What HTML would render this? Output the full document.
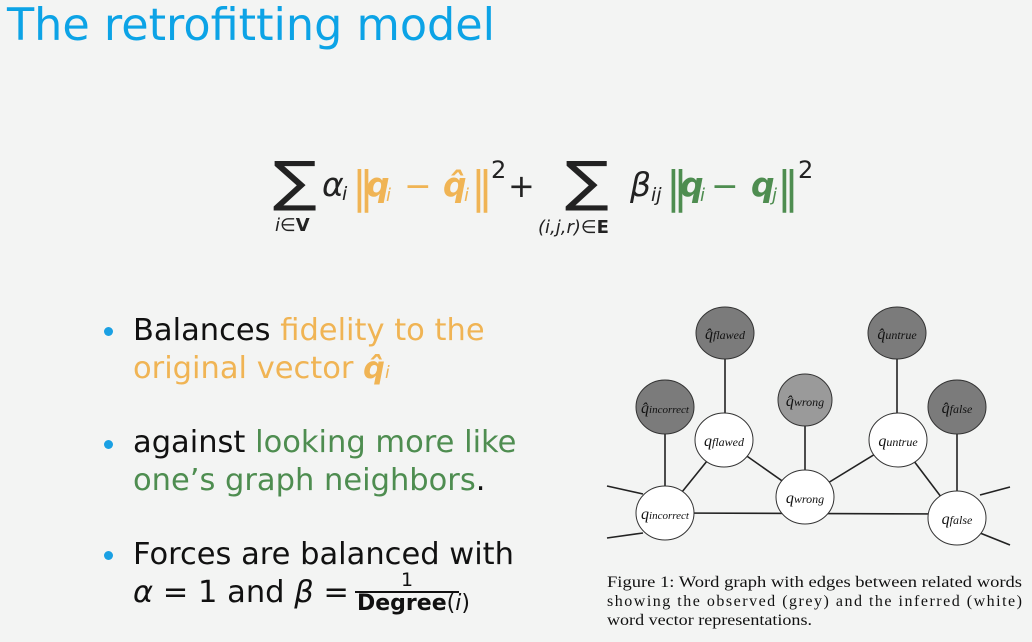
<!DOCTYPE html>
<html><head><meta charset="utf-8"><style>
body{margin:0;width:1032px;height:642px;background:#f3f4f3;position:relative;overflow:hidden;font-family:"DejaVu Sans","Liberation Sans",sans-serif}
.a{position:absolute;white-space:nowrap}
.t{left:7px;top:0px;font-size:44.5px;color:#0ca3e6}
.b{font-size:30.5px;color:#111;left:133px;line-height:36px}
.dot{position:absolute;width:9px;height:9px;border-radius:50%;background:#1aa0e3;left:104px}
.o{color:#f0b454}.g{color:#4e8d50}
.eq{font-family:"DejaVu Sans",sans-serif;font-style:italic}
</style></head><body>
<div class="a t">The retrofitting model</div>

<svg class="a" style="left:0;top:0" width="1032" height="642">
<g font-family="DejaVu Sans, sans-serif">
<text x="273" y="200" font-size="54" fill="#222" textLength="44" lengthAdjust="spacingAndGlyphs">∑</text>
<text x="275" y="231" font-size="18" fill="#222" font-style="italic">i∈<tspan font-style="normal" font-weight="bold">V</tspan></text>
<text x="322" y="196" font-size="33" fill="#222" font-style="italic">α</text>
<text x="342" y="200" font-size="19" fill="#222" font-style="italic">i</text>
<g fill="#f0b454">
<text x="352" y="202" font-size="44">‖</text>
<text x="366" y="196" font-size="33" font-style="italic" font-weight="bold">q</text>
<text x="386" y="201" font-size="18" font-style="italic">i</text>
<text x="404" y="197" font-size="33">−</text>
<text x="443" y="196" font-size="33" font-style="italic" font-weight="bold">q̂</text>
<text x="464" y="201" font-size="18" font-style="italic">i</text>
<text x="471" y="202" font-size="44">‖</text>
</g>
<text x="491" y="178" font-size="24" fill="#222">2</text>
<text x="508" y="197" font-size="32" fill="#222">+</text>
<text x="565" y="200" font-size="54" fill="#222" textLength="44" lengthAdjust="spacingAndGlyphs">∑</text>
<text x="538" y="233" font-size="18" fill="#222" font-style="italic">(i,j,r)∈<tspan font-style="normal" font-weight="bold">E</tspan></text>
<text x="630" y="196" font-size="33" fill="#222" font-style="italic">β</text>
<text x="651" y="201" font-size="19" fill="#222" font-style="italic">ij</text>
<g fill="#4e8d50">
<text x="666" y="202" font-size="44">‖</text>
<text x="680" y="196" font-size="33" font-style="italic" font-weight="bold">q</text>
<text x="700" y="201" font-size="18" font-style="italic">i</text>
<text x="711" y="197" font-size="33">−</text>
<text x="751" y="196" font-size="33" font-style="italic" font-weight="bold">q</text>
<text x="772" y="201" font-size="18" font-style="italic">j</text>
<text x="777" y="202" font-size="44">‖</text>
</g>
<text x="798" y="178" font-size="24" fill="#222">2</text>
</g>
</svg>

<div class="dot" style="top:327px"></div>
<div class="a b" style="top:313px">Balances <span class="o">fidelity to the</span></div>
<div class="a b o" style="top:351px">original vector <b class="eq">q̂</b><span class="eq" style="font-size:17px">i</span></div>
<div class="dot" style="top:440px"></div>
<div class="a b" style="top:425px">against <span class="g">looking more like</span></div>
<div class="a b g" style="top:463px">one’s graph neighbors<span style="color:#111">.</span></div>
<div class="dot" style="top:551px"></div>
<div class="a b" style="top:537px">Forces are balanced with</div>
<div class="a b" style="top:575px"><span class="eq">α</span> = 1 and <span class="eq">β</span> =</div>
<div class="a" style="left:355px;top:570px;width:104px;text-align:center;font-size:19px;color:#111;line-height:20px">1</div>
<div class="a" style="left:355px;top:591px;width:104px;height:2px;background:#111"></div>
<div class="a" style="left:357px;top:591px;font-size:22px;color:#111"><b>Degree</b>(<span class="eq">i</span>)</div>

<svg class="a" style="left:0;top:0" width="1032" height="642">
<g stroke="#222" stroke-width="1.6" fill="none">
<line x1="725" y1="333" x2="725" y2="440"/><line x1="897" y1="333" x2="897" y2="440"/>
<line x1="665" y1="407" x2="665" y2="513"/><line x1="805" y1="400" x2="805" y2="497"/>
<line x1="957" y1="407" x2="957" y2="518"/>
<line x1="665" y1="513" x2="957" y2="514"/>
<line x1="665" y1="513" x2="724" y2="440"/><line x1="724" y1="440" x2="805" y2="497"/>
<line x1="805" y1="497" x2="898" y2="440"/><line x1="898" y1="440" x2="957" y2="518"/>
<line x1="607" y1="486" x2="643" y2="494"/><line x1="607" y1="538" x2="643" y2="533"/>
<line x1="980" y1="495" x2="1010" y2="487"/><line x1="980" y1="533" x2="1010" y2="545"/>
</g>
<g stroke="#333" stroke-width="1">
<ellipse cx="725" cy="333" rx="29" ry="26" fill="#7b7b7b"/>
<ellipse cx="897" cy="333" rx="29" ry="26" fill="#7b7b7b"/>
<ellipse cx="665" cy="407" rx="29" ry="27" fill="#7b7b7b"/>
<ellipse cx="805" cy="400" rx="27" ry="26" fill="#9a9a9a"/>
<ellipse cx="957" cy="407" rx="29" ry="27" fill="#7b7b7b"/>
<ellipse cx="724" cy="440" rx="29" ry="27" fill="#fff"/>
<ellipse cx="898" cy="440" rx="29" ry="27" fill="#fff"/>
<ellipse cx="805" cy="497" rx="29" ry="27" fill="#fff"/>
<ellipse cx="665" cy="513" rx="29" ry="27" fill="#fff"/>
<ellipse cx="957" cy="518" rx="29" ry="27" fill="#fff"/>
</g>
<g font-family="Liberation Serif,serif" font-style="italic" fill="#111" text-anchor="middle">
<text x="725" y="339" font-size="16">q̂<tspan font-size="12">flawed</tspan></text>
<text x="897" y="339" font-size="16">q̂<tspan font-size="12">untrue</tspan></text>
<text x="665" y="413" font-size="16">q̂<tspan font-size="11">incorrect</tspan></text>
<text x="805" y="406" font-size="16">q̂<tspan font-size="12">wrong</tspan></text>
<text x="957" y="413" font-size="16">q̂<tspan font-size="12">false</tspan></text>
<text x="724" y="446" font-size="16">q<tspan font-size="12">flawed</tspan></text>
<text x="898" y="446" font-size="16">q<tspan font-size="12">untrue</tspan></text>
<text x="805" y="503" font-size="16">q<tspan font-size="12">wrong</tspan></text>
<text x="665" y="519" font-size="16">q<tspan font-size="11">incorrect</tspan></text>
<text x="957" y="524" font-size="16">q<tspan font-size="12">false</tspan></text>
</g>
<g font-family="Liberation Serif,serif" font-size="16" fill="#111">
<text x="607" y="587" textLength="415" lengthAdjust="spacingAndGlyphs">Figure 1: Word graph with edges between related words</text>
<text x="607" y="606" textLength="415" lengthAdjust="spacing">showing the observed (grey) and the inferred (white)</text>
<text x="607" y="625" textLength="205" lengthAdjust="spacingAndGlyphs">word vector representations.</text>
</g>
</svg>
</body></html>
